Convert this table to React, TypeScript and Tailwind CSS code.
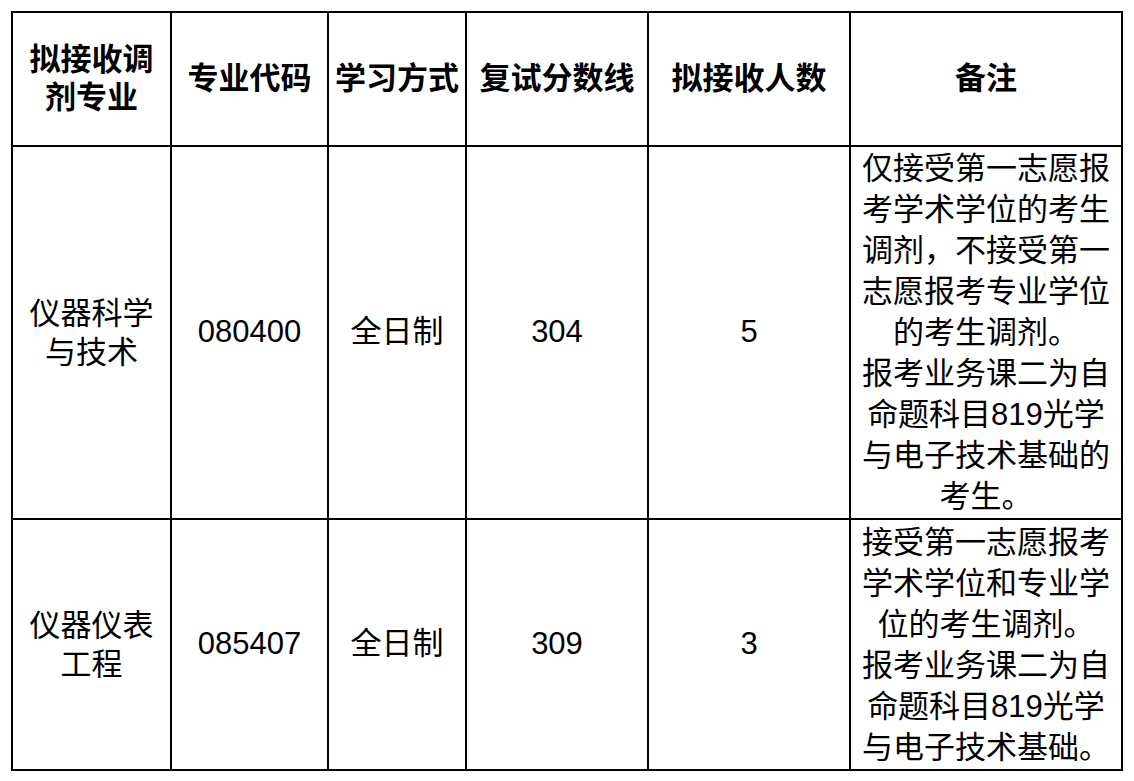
const headers = [
  ["拟接收调", "剂专业"],
  ["专业代码"],
  ["学习方式"],
  ["复试分数线"],
  ["拟接收人数"],
  ["备注"],
];

const rows = [
  {
    major: ["仪器科学", "与技术"],
    code: "080400",
    mode: "全日制",
    score: "304",
    count: "5",
    notes: [
      "仅接受第一志愿报",
      "考学术学位的考生",
      "调剂，不接受第一",
      "志愿报考专业学位",
      "的考生调剂。",
      "报考业务课二为自",
      "命题科目819光学",
      "与电子技术基础的",
      "考生。",
    ],
  },
  {
    major: ["仪器仪表", "工程"],
    code: "085407",
    mode: "全日制",
    score: "309",
    count: "3",
    notes: [
      "接受第一志愿报考",
      "学术学位和专业学",
      "位的考生调剂。",
      "报考业务课二为自",
      "命题科目819光学",
      "与电子技术基础。",
    ],
  },
];

const Cell = ({ children, className = "" }: { children: React.ReactNode; className?: string }) => (
  <div className={`bg-white flex flex-col items-center justify-center text-center ${className}`}>
    {children}
  </div>
);

export default function App() {
  return (
    <div
      className="min-h-[781px] w-[1134px] bg-white pl-[11px] pt-[11px] text-black"
      style={{ fontFamily: '"Liberation Sans", "Noto Sans CJK SC", sans-serif' }}
    >
      <div className="grid w-[1112px] grid-cols-[157px_155px_136px_180px_200px_270px] grid-rows-[132px_371px_249px] gap-[2px] bg-black p-[2px]">
        {headers.map((lines, i) => (
          <Cell key={i} className="text-[31px] font-bold leading-[38px]">
            {lines.map((l) => (
              <div key={l} className="whitespace-nowrap">{l}</div>
            ))}
          </Cell>
        ))}
        {rows.map((r) => (
          <div key={r.code} className="contents">
            <Cell className="text-[31px] leading-[39px]">
              {r.major.map((l) => (
                <div key={l} className="whitespace-nowrap">{l}</div>
              ))}
            </Cell>
            <Cell className="text-[31px]">{r.code}</Cell>
            <Cell className="text-[31px]">{r.mode}</Cell>
            <Cell className="text-[31px]">{r.score}</Cell>
            <Cell className="text-[31px]">{r.count}</Cell>
            <Cell className="text-[31px] leading-[41px]">
              {r.notes.map((l, j) => (
                <div key={j} className="whitespace-nowrap">{l}</div>
              ))}
            </Cell>
          </div>
        ))}
      </div>
    </div>
  );
}
